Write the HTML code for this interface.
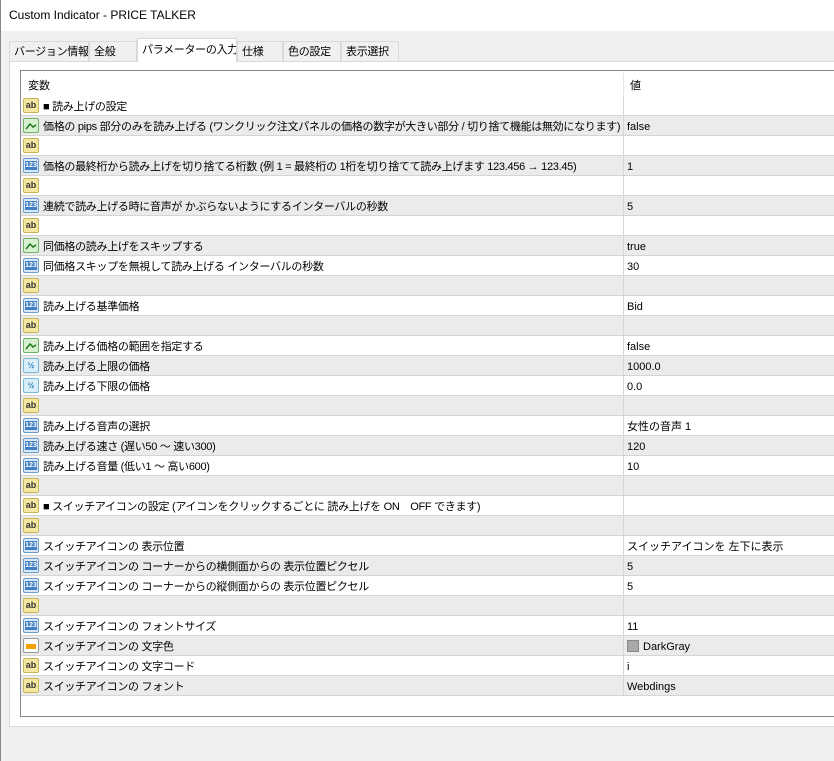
<!DOCTYPE html>
<html><head><meta charset="utf-8"><style>
*{margin:0;padding:0;box-sizing:border-box}
body{width:834px;height:761px;overflow:hidden;background:#f0f0f0;font-family:"Liberation Sans","Noto Sans CJK JP",sans-serif;font-size:11px;color:#000;position:relative}
.title{position:absolute;left:0;top:0;width:834px;height:31px;background:#fff;padding:0 0 0 9px;line-height:31px;font-size:12px}
.lb{position:absolute;left:0;top:0;width:1px;height:761px;background:#888}
.tabs{position:absolute;top:41px;left:9px;height:20px}
.tab{position:absolute;top:0;height:20px;border:1px solid #d9d9d9;border-bottom:none;background:#f0f0f0;line-height:21px;padding-left:4px;font-size:11px;letter-spacing:-0.3px;white-space:nowrap;overflow:hidden}
.tab.act{top:-3px;height:24px;background:#fff;z-index:2;line-height:22px}
.panel{position:absolute;left:9px;top:61px;width:830px;height:666px;background:#fff;border:1px solid #d9d9d9}
.tbl{position:absolute;left:20px;top:70px;width:820px;height:647px;border:1px solid #828790;border-right:none;background:#fff}
.hdr{position:absolute;left:0;top:0;width:820px;height:25px}
.hdr span{position:absolute;top:5px;line-height:20px}
.vline{position:absolute;left:602px;top:2px;width:1px;height:23px;background:#e5e5e5}
.row{position:absolute;left:0;width:820px;height:20px;border-bottom:1px solid #d5d5d5;line-height:19px}
.row.g{background:#ebebeb}
.row .n{position:absolute;left:22px;top:2px;white-space:nowrap;letter-spacing:-0.3px}
.row .v{position:absolute;left:606px;top:2px;white-space:nowrap}
.row .d{position:absolute;left:602px;top:0;width:1px;height:20px;background:#d5d5d5}
.ic{position:absolute;left:2px;top:2px;width:16px;height:15px;border-radius:2px;font-size:8px;font-weight:bold;text-align:center;line-height:13px}
.ab{background:#f4e7a0;border:1px solid #c9b45a;color:#333;font-size:9px}
.n123{background:#d8e8f8;border:1px solid #6a9ccc;color:#fff}
.n123 b{display:block;margin:2px 1px;background:#3f7fc4;height:9px;line-height:9px;font-size:7px}
.bo{background:#d8f0d0;border:1px solid #6db36a}
.fr{background:#d9eef8;border:1px solid #79b8d8;color:#2a7ab0;font-size:8px}
.co{background:#fff;border:1px solid #999}
.co b{position:absolute;left:2px;top:5px;width:10px;height:5px;background:#f5a000}
</style></head><body>
<div class="title">Custom Indicator - PRICE TALKER</div>
<div class="lb"></div>
<div class="tabs">
<div class="tab" style="left:0;width:80px">バージョン情報</div>
<div class="tab" style="left:80px;width:48px">全般</div>
<div class="tab act" style="left:128px;width:100px">パラメーターの入力</div>
<div class="tab" style="left:228px;width:46px">仕様</div>
<div class="tab" style="left:274px;width:58px">色の設定</div>
<div class="tab" style="left:332px;width:58px">表示選択</div>
</div>
<div class="panel"></div>
<div class="tbl">
<div class="hdr"><span style="left:7px">変数</span><span style="left:609px">値</span><div class="vline"></div></div>
<div id="rows"></div>
</div>
<script>
var R=[
["ab","■ 読み上げの設定",""],
["bo","価格の pips 部分のみを読み上げる (ワンクリック注文パネルの価格の数字が大きい部分 / 切り捨て機能は無効になります)","false"],
["ab","",""],
["n","価格の最終桁から読み上げを切り捨てる桁数 (例 1 = 最終桁の 1桁を切り捨てて読み上げます 123.456 → 123.45)","1"],
["ab","",""],
["n","連続で読み上げる時に音声が かぶらないようにするインターバルの秒数","5"],
["ab","",""],
["bo","同価格の読み上げをスキップする","true"],
["n","同価格スキップを無視して読み上げる インターバルの秒数","30"],
["ab","",""],
["n","読み上げる基準価格","Bid"],
["ab","",""],
["bo","読み上げる価格の範囲を指定する","false"],
["fr","読み上げる上限の価格","1000.0"],
["fr","読み上げる下限の価格","0.0"],
["ab","",""],
["n","読み上げる音声の選択","女性の音声 1"],
["n","読み上げる速さ (遅い50 〜 速い300)","120"],
["n","読み上げる音量 (低い1 〜 高い600)","10"],
["ab","",""],
["ab","■ スイッチアイコンの設定 (アイコンをクリックするごとに 読み上げを ON　OFF できます)",""],
["ab","",""],
["n","スイッチアイコンの 表示位置","スイッチアイコンを 左下に表示"],
["n","スイッチアイコンの コーナーからの横側面からの 表示位置ピクセル","5"],
["n","スイッチアイコンの コーナーからの縦側面からの 表示位置ピクセル","5"],
["ab","",""],
["n","スイッチアイコンの フォントサイズ","11"],
["co","スイッチアイコンの 文字色","DarkGray"],
["ab","スイッチアイコンの 文字コード","i"],
["ab","スイッチアイコンの フォント","Webdings"]];
var h="";
R.forEach(function(r,i){
var ic="";
if(r[0]=="ab")ic='<div class="ic ab">ab</div>';
else if(r[0]=="n")ic='<div class="ic n123"><b>123</b></div>';
else if(r[0]=="bo")ic='<div class="ic bo"><svg width="14" height="13"><path d="M2 10 L6 5 L9 8 L12 6" stroke="#1a7a1a" stroke-width="1.5" fill="none"/></svg></div>';
else if(r[0]=="fr")ic='<div class="ic fr">½</div>';
else ic='<div class="ic co"><b></b></div>';
var v=r[2];
if(r[0]=="co")v='<span style="display:inline-block;width:12px;height:12px;background:#a9a9a9;border:1px solid #888;vertical-align:-2px;margin-right:4px"></span>'+v;
h+='<div class="row'+(i%2?' g':'')+'" style="top:'+(25+i*20)+'px">'+ic+'<span class="n">'+r[1]+'</span><div class="d"></div><span class="v">'+v+'</span></div>';
});
document.getElementById("rows").innerHTML=h;
</script>
</body></html>
